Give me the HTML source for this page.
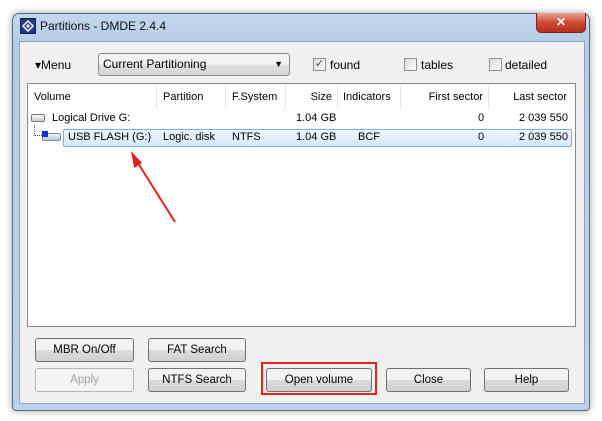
<!DOCTYPE html>
<html><head><style>
*{box-sizing:border-box;margin:0;padding:0}
body{width:602px;height:421px;background:#fff;position:relative;overflow:hidden;font-family:"Liberation Sans",sans-serif;font-size:11px;color:#000}
.win{position:absolute;left:12px;top:13px;width:578px;height:398px;border:1px solid #5a6b7e;border-radius:7px 7px 4px 4px;background:linear-gradient(#c4d8ee,#b6cce6 30px,#bdd2ea);box-shadow:0 0 8px rgba(0,0,0,.35)}
.client{position:absolute;left:19px;top:41px;width:566px;height:363px;background:#f0f0f0;border:1px solid #8ea3bb}
.a{position:absolute;white-space:nowrap}
.btn{position:absolute;height:24px;border:1px solid #707070;border-radius:3px;background:linear-gradient(#f2f2f2 50%,#dcdcdc 50%,#d0d0d0);text-align:center;line-height:22px;font-size:11.5px}
.cb{position:absolute;width:13px;height:13px;border:1px solid #8f8f8f;background:linear-gradient(135deg,#dcdcdc,#fbfbfb)}
.hd{position:absolute;top:85px;height:24px;line-height:24px;border-right:1px solid #e4e4e4}
</style></head><body>
<div class="win"></div>
<div class="a" style="left:20px;top:18px;width:16px;height:16px;background:#1e3c86;border:1px solid #0c1d50"><svg width="14" height="14" viewBox="0 0 14 14"><path d="M7 2L12 7 7 12 2 7Z" fill="none" stroke="#fff" stroke-width="1.5"/><path d="M7 5L9 7 7 9 5 7Z" fill="#fff"/></svg></div>
<div class="a" style="left:40px;top:19px;font-size:12px;color:#111">Partitions - DMDE 2.4.4</div>
<div class="a" style="left:536px;top:13px;width:50px;height:20px;border:1px solid #6b2a22;border-top:none;border-radius:0 0 5px 5px;background:linear-gradient(#e8a393,#cf4a34 50%,#b42e1a);color:#fff;text-align:center;font-weight:bold;font-size:12px;line-height:19px">✕</div>
<div class="client"></div>
<div class="a" style="left:35px;top:58px;font-size:12px">▾Menu</div>
<div class="a" style="left:98px;top:53px;width:192px;height:23px;border:1px solid #8a8a8a;border-radius:3px;background:linear-gradient(#f3f3f3 50%,#e0e0e0 50%,#d6d6d6);padding-left:4px;line-height:21px;font-size:12px">Current Partitioning<span style="position:absolute;right:6px;font-size:9px">▼</span></div>
<div class="cb" style="left:313px;top:58px;font-size:11px;line-height:11px;color:#3a4f8a;text-align:center">✓</div>
<div class="a" style="left:330px;top:58px;font-size:12px">found</div>
<div class="cb" style="left:404px;top:58px"></div>
<div class="a" style="left:421px;top:58px;font-size:12px">tables</div>
<div class="cb" style="left:489px;top:58px"></div>
<div class="a" style="left:505px;top:58px;font-size:12px">detailed</div>
<div class="a" style="left:27px;top:83px;width:549px;height:244px;background:#fff;border:1px solid #828790"></div>
<div class="hd" style="left:28px;width:129px;padding-left:6px">Volume</div>
<div class="hd" style="left:157px;width:69px;padding-left:6px">Partition</div>
<div class="hd" style="left:226px;width:60px;padding-left:6px">F.System</div>
<div class="hd" style="left:286px;width:52px;text-align:right;padding-right:5px">Size</div>
<div class="hd" style="left:338px;width:63px;padding-left:5px">Indicators</div>
<div class="hd" style="left:401px;width:88px;text-align:right;padding-right:5px">First sector</div>
<div class="hd" style="left:489px;width:86px;text-align:right;padding-right:8px;border:none">Last sector</div>
<div class="a" style="left:31px;top:114px;width:14px;height:8px;border:1px solid #777;border-radius:2px;background:linear-gradient(#fafafa,#cfcfcf)"></div>
<div class="a" style="left:52px;top:112px">Logical Drive G:</div>
<div class="a" style="left:296px;top:112px">1.04 GB</div>
<div class="a" style="left:478px;top:112px">0</div>
<div class="a" style="left:519px;top:112px">2 039 550</div>
<div class="a" style="left:34px;top:125px;width:8px;height:11px;border-left:1px dotted #555;border-bottom:1px dotted #555"></div>
<div class="a" style="left:42px;top:133px;width:19px;height:8px;border:1px solid #7e8fa5;border-radius:2px;background:linear-gradient(#eef3fa,#b9c7d8)"></div>
<div class="a" style="left:42px;top:131px;width:6px;height:6px;background:#1030e0"></div>
<div class="a" style="left:63px;top:129px;width:509px;height:18px;border:1px solid #7daee6;border-radius:2px;background:linear-gradient(#eef5fd,#d6e8fb)"></div>
<div class="a" style="left:68px;top:131px">USB FLASH (G:)</div>
<div class="a" style="left:163px;top:131px">Logic. disk</div>
<div class="a" style="left:232px;top:131px">NTFS</div>
<div class="a" style="left:296px;top:131px">1.04 GB</div>
<div class="a" style="left:358px;top:131px">BCF</div>
<div class="a" style="left:478px;top:131px">0</div>
<div class="a" style="left:519px;top:131px">2 039 550</div>
<svg class="a" style="left:0;top:0" width="602" height="421"><line x1="175" y1="222" x2="136" y2="160" stroke="#e8201c" stroke-width="2"/><path d="M131 151L142 163 134 168Z" fill="#e8201c"/></svg>
<div class="btn" style="left:35px;top:338px;width:99px">MBR On/Off</div>
<div class="btn" style="left:148px;top:338px;width:98px">FAT Search</div>
<div class="btn" style="left:35px;top:368px;width:99px;color:#a0a0a0;border-color:#b5b5b5;background:#f4f4f4">Apply</div>
<div class="btn" style="left:148px;top:368px;width:98px">NTFS Search</div>
<div class="a" style="left:261px;top:362px;width:116px;height:33px;border:2px solid #e8201c"></div>
<div class="btn" style="left:266px;top:368px;width:106px">Open volume</div>
<div class="btn" style="left:386px;top:368px;width:85px">Close</div>
<div class="btn" style="left:484px;top:368px;width:85px">Help</div>
</body></html>
